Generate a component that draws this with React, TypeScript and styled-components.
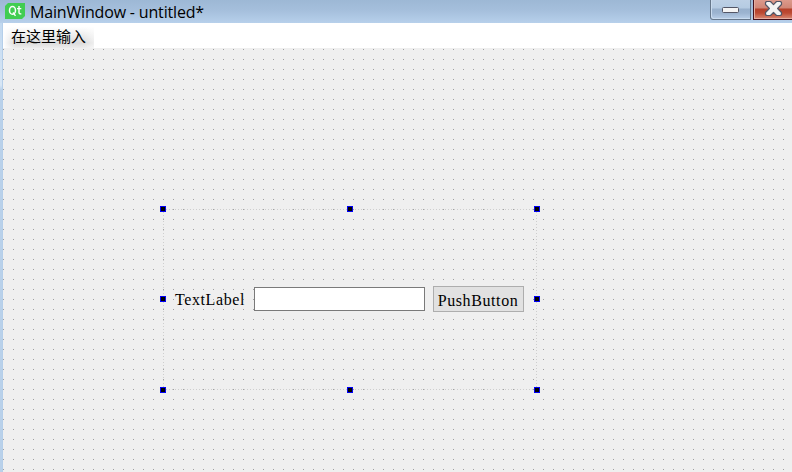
import React from "react";
import styled, { createGlobalStyle } from "styled-components";

const GlobalStyle = createGlobalStyle`
  body { margin: 0; overflow: hidden; background: #b9d1ea; }
  * { box-sizing: border-box; }
`;

const Window = styled.div`
  width: 792px;
  height: 472px;
  display: flex;
  flex-direction: column;
  overflow: hidden;
  background: #b9d1ea;
`;

const TitleBar = styled.header`
  height: 23px;
  flex: none;
  display: flex;
  align-items: flex-start;
  padding-left: 5px;
  background: linear-gradient(#9db8d5, #a5bfdc 45%, #b7d0eb);
`;

const Logo = styled.svg`
  display: block;
  margin-top: 3px;
  flex: none;
`;

const Title = styled.h1`
  flex: 1;
  margin: 1px 0 0 5px;
  font: 400 16px/22px "Open Sans", "Noto Sans", sans-serif;
  letter-spacing: -0.17px;
  color: #000;
  white-space: nowrap;
`;

const Controls = styled.div`
  display: flex;
  gap: 2px;
  height: 21px;
`;

const ControlButton = styled.button<{ $danger?: boolean }>`
  width: ${(p) => (p.$danger ? 39 : 41)}px;
  height: 20px;
  padding: 0;
  border: 1px solid ${(p) => (p.$danger ? "#43101c" : "#66778b")};
  border-width: 0 ${(p) => (p.$danger ? 0 : 1)}px 1px 1px;
  border-radius: 0 0 0 ${(p) => (p.$danger ? 0 : 3)}px;
  background: ${(p) =>
    p.$danger
      ? "linear-gradient(#dc9a8c 0, #d08676 8px, #b5402a 9px, #bd4a33 13px, #d98a75 19px)"
      : "linear-gradient(#bdd0e5 0, #b5cbe2 8px, #98b0cc 9px, #9cb4d0 13px, #b9cfe8 19px)"};
  box-shadow: inset 1px -1px 0 ${(p) => (p.$danger ? "#e5ada0" : "#cadcef")};
`;

const ControlIcon = styled.svg`
  display: block;
`;

const Body = styled.div`
  flex: 1;
  display: flex;
  min-height: 0;
`;

const Frame = styled.div`
  width: 3px;
  flex: none;
  background: linear-gradient(#c2d9f0 0, #d7e6f5 62px, #b9d1ea 67px);
  border-right: 1px solid #b5cfea;
`;

const Client = styled.main`
  flex: 1;
  display: flex;
  flex-direction: column;
`;

const MenuBar = styled.nav`
  height: 25px;
  flex: none;
  display: flex;
  background: #fff;
`;

const MenuItem = styled.div`
  width: 91px;
  height: 25px;
  padding-left: 8px;
  font: 400 15px/25px "Noto Sans CJK SC", sans-serif;
  color: #000;
  white-space: nowrap;
  background: linear-gradient(90deg, #fff, transparent 12px, transparent 80px, #ffffff80),
    linear-gradient(#fff 15%, #dcdcdc 80%, #ececec);
`;

const Canvas = styled.section`
  position: relative;
  flex: 1;
  background-color: #efefef;
  background-image: conic-gradient(from 90deg at 9px 9px, #a0a0a0 0 90deg, #efefef 0);
  background-size: 10px 10px;
  background-position: 1px 2px;
`;

const Selection = styled.div`
  position: absolute;
  left: 160px;
  top: 161px;
  width: 374px;
  height: 181px;
  display: flex;
  align-items: center;
  padding: 0 13px 1px 12px;
  background:
    repeating-linear-gradient(90deg, #cecece 0 1px, transparent 1px 3px) 0 0 / 100% 1px no-repeat,
    repeating-linear-gradient(90deg, #cecece 0 1px, transparent 1px 3px) 0 100% / 100% 1px no-repeat,
    repeating-linear-gradient(#cecece 0 1px, transparent 1px 3px) 0 0 / 1px 100% no-repeat,
    repeating-linear-gradient(#cecece 0 1px, transparent 1px 3px) 100% 0 / 1px 100% no-repeat;
`;

const Label = styled.label`
  width: 79px;
  flex: none;
  padding-top: 2px;
  font: 400 16px/20px "Liberation Serif", serif;
  letter-spacing: 0.6px;
  color: #000;
  white-space: nowrap;
`;

const Field = styled.input`
  width: 171px;
  height: 24px;
  flex: none;
  margin: 0 8px 0 0;
  padding: 0 4px;
  border: 1px solid #7a7a7a;
  border-radius: 0;
  background: #fff;
`;

const PushButton = styled.button`
  width: 91px;
  height: 26px;
  flex: none;
  padding: 3px 1px 0 0;
  border: 1px solid #adadad;
  border-radius: 0;
  background: #e1e1e1;
  font: 400 16px/20px "Liberation Serif", serif;
  letter-spacing: 0.6px;
  color: #000;
`;

const Handle = styled.i<{ $x: number; $y: number }>`
  position: absolute;
  left: ${(p) => p.$x}px;
  top: ${(p) => p.$y}px;
  width: 6px;
  height: 6px;
  border: 1px solid #0000f5;
  background: #000;
`;

const handles = [
  [-3, -3], [184, -3], [371, -3],
  [-3, 87], [371, 87],
  [-3, 178], [184, 178], [371, 178],
];

export default function App() {
  return (
    <>
      <GlobalStyle />
      <Window>
        <TitleBar>
          <Logo width="20" height="16" viewBox="0 0 20 16">
            <path d="M3 0H20V13L17 16H0V3Z" fill="#41cd52" />
            <ellipse cx="7.5" cy="7.4" rx="3" ry="3.9" fill="none" stroke="#fff" strokeWidth="1.5" />
            <path d="M8 9.5L10.5 12.8M14 3V9.6Q14 11.3 16.3 10.8M12 5.6H16.3" fill="none" stroke="#fff" strokeWidth="1.4" />
          </Logo>
          <Title>MainWindow - untitled*</Title>
          <Controls>
            <ControlButton aria-label="Minimize">
              <ControlIcon width="40" height="19" viewBox="0 0 40 19">
                <rect x="11.5" y="7.5" width="16" height="5" rx="1" fill="#f4f4f4" stroke="#535666" />
              </ControlIcon>
            </ControlButton>
            <ControlButton $danger aria-label="Close">
              <ControlIcon width="38" height="19" viewBox="0 0 38 19">
                <path
                  d="M12.5 1.5H16.5L19.5 4.6L22.5 1.5H26.5L27.5 2.5V4.5L23.6 8.5L27.5 12.5V14.5L26.5 15.5H22.5L19.5 12.4L16.5 15.5H12.5L11.5 14.5V12.5L15.4 8.5L11.5 4.5V2.5Z"
                  fill="#f3f3f3"
                  stroke="#535666"
                  strokeWidth="1.2"
                  strokeLinejoin="round"
                />
              </ControlIcon>
            </ControlButton>
          </Controls>
        </TitleBar>
        <Body>
          <Frame />
          <Client>
            <MenuBar>
              <MenuItem>在这里输入</MenuItem>
            </MenuBar>
            <Canvas>
              <Selection>
                <Label>TextLabel</Label>
                <Field aria-label="Text" />
                <PushButton>PushButton</PushButton>
                {handles.map(([x, y]) => (
                  <Handle key={`${x},${y}`} $x={x} $y={y} />
                ))}
              </Selection>
            </Canvas>
          </Client>
        </Body>
      </Window>
    </>
  );
}
